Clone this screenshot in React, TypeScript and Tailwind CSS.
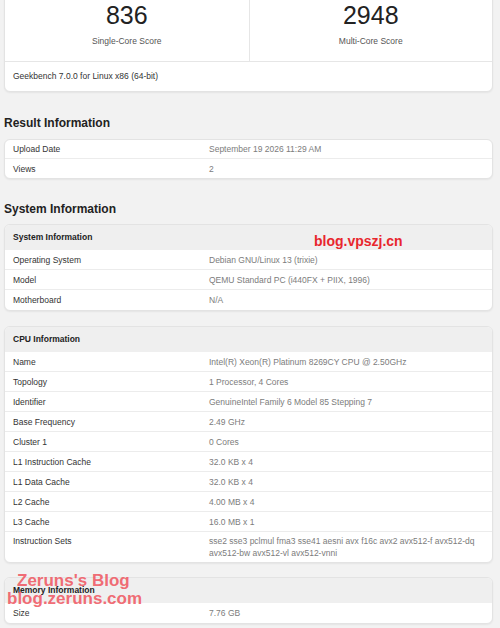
import React from "react";

type Row = { label: string; value: string };

const resultRows: Row[] = [
  { label: "Upload Date", value: "September 19 2026 11:29 AM" },
  { label: "Views", value: "2" },
];

const systemRows: Row[] = [
  { label: "Operating System", value: "Debian GNU/Linux 13 (trixie)" },
  { label: "Model", value: "QEMU Standard PC (i440FX + PIIX, 1996)" },
  { label: "Motherboard", value: "N/A" },
];

const cpuRows: Row[] = [
  { label: "Name", value: "Intel(R) Xeon(R) Platinum 8269CY CPU @ 2.50GHz" },
  { label: "Topology", value: "1 Processor, 4 Cores" },
  { label: "Identifier", value: "GenuineIntel Family 6 Model 85 Stepping 7" },
  { label: "Base Frequency", value: "2.49 GHz" },
  { label: "Cluster 1", value: "0 Cores" },
  { label: "L1 Instruction Cache", value: "32.0 KB x 4" },
  { label: "L1 Data Cache", value: "32.0 KB x 4" },
  { label: "L2 Cache", value: "4.00 MB x 4" },
  { label: "L3 Cache", value: "16.0 MB x 1" },
  {
    label: "Instruction Sets",
    value: "sse2 sse3 pclmul fma3 sse41 aesni avx f16c avx2 avx512\u2011f avx512\u2011dq avx512\u2011bw avx512\u2011vl avx512\u2011vnni",
  },
];

const memoryRows: Row[] = [{ label: "Size", value: "7.76 GB" }];

const card =
  "ml-[4px] w-[489px] rounded-[6px] border border-[#e3e3e3] bg-white shadow-[0_1px_2px_rgba(0,0,0,0.06)] overflow-hidden";

function Rows({ rows }: { rows: Row[] }) {
  return (
    <div className="divide-y divide-[#ececec]">
      {rows.map((r) => {
        const long = r.value.length > 60;
        return (
          <div
            key={r.label}
            className={`flex text-[8.5px] leading-[12px] ${long ? "pt-[3px] pb-[3px]" : "h-[20px] items-center"}`}
          >
            <div className="w-[204px] shrink-0 pl-[8px] text-[#333]">{r.label}</div>
            <div className="pr-[12px] text-[#7c7c7c]">{r.value}</div>
          </div>
        );
      })}
    </div>
  );
}

function InfoCard({ title, rows, className = "" }: { title: string; rows: Row[]; className?: string }) {
  return (
    <div className={`${card} ${className}`}>
      <div className="flex h-[25px] items-center bg-[#efefef] pl-[8px] text-[8.5px] font-bold text-[#222]">{title}</div>
      <Rows rows={rows} />
    </div>
  );
}

function Heading({ children, className = "" }: { children: React.ReactNode; className?: string }) {
  return (
    <h2 className={`pl-[4px] text-[12px] font-bold leading-[16px] text-[#222] ${className}`}>{children}</h2>
  );
}

export default function App() {
  return (
    <div className="relative h-[628px] w-[500px] overflow-hidden bg-[#f2f2f2] font-[family-name:'Liberation_Sans',Arial,sans-serif]">
      {/* Scores */}
      <div className={`${card} -mt-[8px] rounded-t-none`}>
        <div className="grid grid-cols-2 border-b border-[#e6e6e6]">
          <div className="flex flex-col items-center pt-[8px] pb-[14px]">
            <div className="text-[25px] leading-[28px] text-[#222]">836</div>
            <div className="mt-[6px] text-[8.5px] leading-[12px] text-[#555]">Single-Core Score</div>
          </div>
          <div className="flex flex-col items-center border-l border-[#e6e6e6] pt-[8px] pb-[14px]">
            <div className="text-[25px] leading-[28px] text-[#222]">2948</div>
            <div className="mt-[6px] text-[8.5px] leading-[12px] text-[#555]">Multi-Core Score</div>
          </div>
        </div>
        <div className="pt-[8px] pb-[9px] pl-[8px] text-[8.5px] leading-[12px] text-[#333]">
          Geekbench 7.0.0 for Linux x86 (64-bit)
        </div>
      </div>

      <Heading className="mt-[23px] mb-[8px]">Result Information</Heading>
      <div className={card}>
        <div className="-my-px">
          <Rows rows={resultRows} />
        </div>
      </div>

      <Heading className="mt-[22px] mb-[7px]">System Information</Heading>
      <InfoCard title="System Information" rows={systemRows} />
      <InfoCard title="CPU Information" rows={cpuRows} className="mt-[15px]" />
      <InfoCard title="Memory Information" rows={memoryRows} className="mt-[14px]" />

      {/* watermarks */}
      <div className="absolute left-[314px] top-[232px] text-[14px] font-bold leading-[18px] text-[#e8262d]">
        blog.vpszj.cn
      </div>
      <div className="absolute left-[17px] top-[571px] text-[17px] font-bold leading-[20px] text-[#ef5a64]/90">
        Zeruns's Blog
      </div>
      <div className="absolute left-[7px] top-[589px] text-[17px] font-bold leading-[20px] text-[#ef5a64]/90">
        blog.zeruns.com
      </div>
    </div>
  );
}
